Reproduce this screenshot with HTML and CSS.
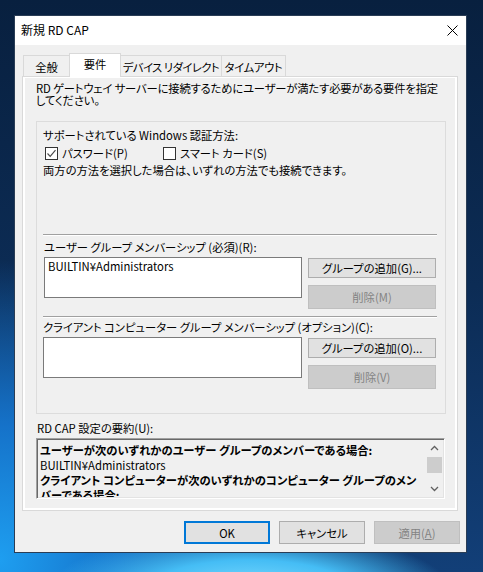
FILE: index.html
```html
<!DOCTYPE html>
<html lang="ja">
<head>
<meta charset="utf-8">
<title>新規 RD CAP</title>
<link rel="stylesheet" href="styles.css">
</head>
<body>
<div class="dialog">
  <div class="titlebar">
    <span class="title">新規 RD CAP</span>
    <svg class="close" width="11" height="11" viewBox="0 0 11 11"><path d="M0.5 0.5 L10.5 10.5 M10.5 0.5 L0.5 10.5" stroke="#000" stroke-width="1" fill="none"/></svg>
  </div>
  <div class="tabs">
    <div class="tab t1">全般</div>
    <div class="tab t2 active">要件</div>
    <div class="tab t3">デバイス リダイレクト</div>
    <div class="tab t4">タイムアウト</div>
  </div>
  <div class="panel">
    <div class="page">
      <div class="desc">
        <div class="dline">RD ゲートウェイ サーバーに接続するためにユーザーが満たす必要がある要件を指定</div>
        <div class="dline">してください。</div>
      </div>
      <div class="group">
        <div class="line auth-title">サポートされている Windows 認証方法:</div>
        <div class="checks">
          <label class="check c1"><span class="box"><svg width="11" height="11" viewBox="0 0 11 11"><path d="M1.5 5.5 L4.2 8.3 L9.5 2.2" stroke="#4a4a4a" stroke-width="1.2" fill="none"/></svg></span>パスワード(P)</label>
          <label class="check c2"><span class="box"></span>スマート カード(S)</label>
        </div>
        <div class="line note">両方の方法を選択した場合は、いずれの方法でも接続できます。</div>
        <div class="sep sep1"></div>
        <div class="line lbl1">ユーザー グループ メンバーシップ (必須)(R):</div>
        <div class="row row1">
          <div class="listbox"><div class="item">BUILTIN¥Administrators</div></div>
          <div class="btncol">
            <div class="btn add">グループの追加(G)...</div>
            <div class="btn del disabled">削除(M)</div>
          </div>
        </div>
        <div class="sep sep2"></div>
        <div class="line lbl2">クライアント コンピューター グループ メンバーシップ (オプション)(C):</div>
        <div class="row row2">
          <div class="listbox lb2"></div>
          <div class="btncol">
            <div class="btn add">グループの追加(O)...</div>
            <div class="btn del disabled">削除(V)</div>
          </div>
        </div>
      </div>
      <div class="line sumlbl">RD CAP 設定の要約(U):</div>
      <div class="summary">
        <div class="sumtext">
          <div class="b">ユーザーが次のいずれかのユーザー グループのメンバーである場合:</div>
          <div>BUILTIN¥Administrators</div>
          <div class="b">クライアント コンピューターが次のいずれかのコンピューター グループのメン</div>
          <div class="b">バーである場合:</div>
        </div>
        <div class="scrollbar">
          <svg class="arrow" width="17" height="17" viewBox="0 0 17 17"><path d="M5 10 L8.5 6.5 L12 10" stroke="#606060" stroke-width="1.3" fill="none"/></svg>
          <div class="track"><div class="thumb"></div></div>
          <svg class="arrow" width="17" height="17" viewBox="0 0 17 17"><path d="M5 7 L8.5 10.5 L12 7" stroke="#606060" stroke-width="1.3" fill="none"/></svg>
        </div>
      </div>
    </div>
  </div>
  <div class="buttons">
    <div class="btn dlg ok">OK</div>
    <div class="btn dlg">キャンセル</div>
    <div class="btn dlg disabled">適用(<u>A</u>)</div>
  </div>
</div>
</body>
</html>
```
FILE: styles.css
```css
* { box-sizing: border-box; }
html, body { margin: 0; }
body {
  width: 483px;
  height: 572px;
  overflow: hidden;
  padding: 15px 16px 19px 14px;
  font-family: "Noto Sans CJK JP", "Noto Sans", sans-serif;
  font-feature-settings: "palt";
  font-size: 11.3px;
  color: #000;
  background:
    radial-gradient(ellipse 200px 60px at 250px 590px, #7fdcff 0%, #45bdf5 50%, rgba(40,150,230,0) 100%),
    radial-gradient(ellipse 260px 300px at 0px 560px, #1e9ef0 0%, #1572c9 45%, rgba(14,60,120,0) 100%),
    linear-gradient(180deg, #08203f 0%, #0c2c55 50%, #123f78 100%);
}
.dialog {
  width: 453px;
  height: 538px;
  border: 1px solid #2a3d55;
  background: #f0f0f0;
  display: flex;
  flex-direction: column;
}
.titlebar {
  height: 29px;
  background: #fff;
  display: flex;
  align-items: center;
  justify-content: space-between;
  padding: 0 8px 1px 6px;
  flex: none;
}
.title { line-height: 14px; font-size: 12px; }
.tabs {
  display: flex;
  align-items: flex-end;
  margin: 8px 0 0 8px;
  height: 23px;
  flex: none;
}
.tab {
  height: 21px;
  border: 1px solid #d9d9d9;
  border-bottom: none;
  background: #f0f0f0;
  display: flex;
  justify-content: center;
  align-items: center;
  padding-top: 1px;
  line-height: 14px;
  margin-left: -1px;
  white-space: nowrap;
}
.t1 { width: 47px; margin-left: 0; }
.t2 { width: 52px; }
.t3 { width: 102px; letter-spacing: -0.5px; }
.t4 { width: 65px; letter-spacing: -0.3px; }
.tab.active {
  height: 24px;
  background: #fff;
  margin-bottom: -1px;
  position: relative;
  z-index: 1;
  align-items: flex-start;
  padding-top: 3px;
}
.panel {
  margin-left: 7px;
  width: 436px;
  height: 435px;
  border: 1px solid #d9d9d9;
  background: #fff;
  padding: 1px 2px 2px 2px;
  flex: none;
}
.page {
  height: 100%;
  background: #f0f0f0;
  padding: 0 0 0 11px;
}
.desc {
  padding-top: 4px;
  height: 28px;
}
.dline { height: 12px; line-height: 12px; white-space: nowrap; letter-spacing: -0.15px; }
.group {
  margin-top: 15px;
  width: 410px;
  height: 293px;
  border: 1px solid #dcdcdc;
  padding: 0 0 0 6px;
}
.line { line-height: 14px; height: 14px; white-space: nowrap; }
.auth-title { margin-top: 6px; }
.checks {
  margin-top: 4px;
  height: 14px;
  display: flex;
  align-items: center;
}
.check {
  display: flex;
  align-items: center;
  line-height: 14px;
}
.c1 { margin-left: 2px; width: 118px; }
.box {
  width: 13px;
  height: 13px;
  border: 1px solid #333;
  background: #fff;
  margin-right: 4px;
  display: flex;
  align-items: center;
  justify-content: center;
}
.note { margin-top: 3px; }
.sep {
  width: 394px;
  height: 2px;
  border-top: 1px solid #a0a0a0;
  border-bottom: 1px solid #fff;
}
.sep1 { margin-top: 57px; }
.lbl1 { margin-top: 4px; margin-left: 1px; }
.row {
  display: flex;
  margin-top: 3px;
}
.listbox {
  width: 258px;
  height: 41px;
  border: 1px solid #7a7a7a;
  background: #fff;
  margin-left: 1px;
}
.lb2 { margin-left: 0; width: 259px; }
.item { padding: 1px 0 0 3px; line-height: 14px; }
.btncol {
  margin-left: 6px;
  width: 128px;
  display: flex;
  flex-direction: column;
  gap: 7px;
  padding-top: 1px;
}
.btn {
  border: 1px solid #adadad;
  background: #e1e1e1;
  display: flex;
  align-items: center;
  justify-content: center;
  line-height: 14px;
  white-space: nowrap;
}
.btn.add { height: 20px; }
.btn.del { height: 24px; }
.btn.disabled {
  background: #cccccc;
  border-color: #bfbfbf;
  color: #838383;
}
.sep2 { margin-top: 7px; }
.lbl2 { margin-top: 2px; }
.sumlbl { margin-top: 7px; margin-left: 1px; }
.summary {
  margin-top: 3px;
  width: 409px;
  height: 61px;
  border: 1px solid;
  border-color: #a0a0a0 #ffffff #ffffff #a0a0a0;
  box-shadow: inset 1px 1px 0 #696969, inset -1px -1px 0 #e3e3e3;
  background: #f0f0f0;
  display: flex;
  padding: 1px;
  overflow: hidden;
}
.sumtext {
  flex: 1;
  min-width: 0;
  padding: 3px 0 0 2px;
  line-height: 15px;
  white-space: nowrap;
  overflow: hidden;
}
.b { font-weight: bold; }
.scrollbar {
  width: 17px;
  display: flex;
  flex-direction: column;
  background: #f0f0f0;
  flex: none;
}
.arrow { flex: none; }
.track { flex: 1; padding: 0 1px; }
.thumb { height: 16px; background: #cdcdcd; }
.buttons {
  display: flex;
  justify-content: flex-end;
  gap: 9px;
  margin-top: 10px;
  padding-right: 6px;
}
.btn.dlg { width: 86px; height: 23px; }
.btn.ok { border: 2px solid #0078d7; }
```
